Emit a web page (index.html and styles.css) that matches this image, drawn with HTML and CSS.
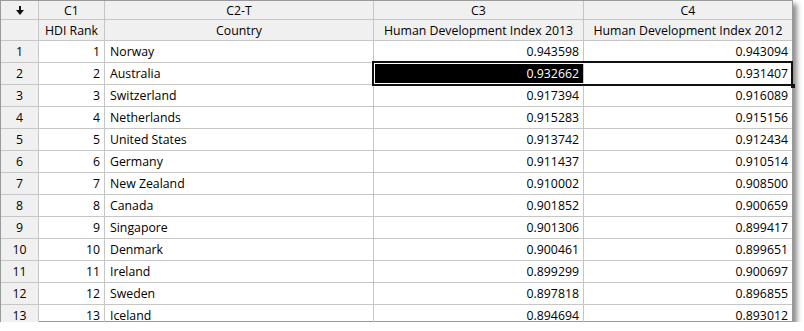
FILE: index.html
```html
<!DOCTYPE html>
<html lang="en">

<head>
    <meta charset="UTF-8">
    <title>Worksheet 1</title>
    <link rel="stylesheet" href="styles.css">
</head>

<body>
    <div class="sheet">
        <div class="row head-row">
            <div class="cell corner">
                <svg width="8" height="9" viewBox="0 0 8 9">
                    <rect x="3" y="0" width="2" height="5" fill="#111" />
                    <polygon points="0,4 8,4 4,9" fill="#111" />
                </svg>
            </div>
            <div class="cell head">C1</div>
            <div class="cell head">C2-T</div>
            <div class="cell head">C3</div>
            <div class="cell head">C4</div>
        </div>
        <div class="row name-row">
            <div class="cell corner"></div>
            <div class="cell head">HDI Rank</div>
            <div class="cell head">Country</div>
            <div class="cell head">Human Development Index 2013</div>
            <div class="cell head">Human Development Index 2012</div>
        </div>
        <div id="rows"></div>

        <!-- current selection C3:C4 row 2 -->
        <div class="selection"></div>
    </div>

    <script>
        const data = [
            [1, 'Norway', '0.943598', '0.943094'],
            [2, 'Australia', '0.932662', '0.931407'],
            [3, 'Switzerland', '0.917394', '0.916089'],
            [4, 'Netherlands', '0.915283', '0.915156'],
            [5, 'United States', '0.913742', '0.912434'],
            [6, 'Germany', '0.911437', '0.910514'],
            [7, 'New Zealand', '0.910002', '0.908500'],
            [8, 'Canada', '0.901852', '0.900659'],
            [9, 'Singapore', '0.901306', '0.899417'],
            [10, 'Denmark', '0.900461', '0.899651'],
            [11, 'Ireland', '0.899299', '0.900697'],
            [12, 'Sweden', '0.897818', '0.896855'],
            [13, 'Iceland', '0.894694', '0.893012']
        ];

        const body = document.getElementById('rows');
        data.forEach((rec, i) => {
            const row = document.createElement('div');
            row.className = 'row data-row';
            row.innerHTML = `
                <div class="cell rownum">${i + 1}</div>
                <div class="cell num">${rec[0]}</div>
                <div class="cell text">${rec[1]}</div>
                <div class="cell num${i === 1 ? ' active' : ''}">${rec[2]}</div>
                <div class="cell num">${rec[3]}</div>
            `;
            body.appendChild(row);
        });
    </script>
</body>

</html>
```

FILE: styles.css
```css
body {
    margin: 0;
    background-color: #fff;
    font-family: "Open Sans", "Noto Sans", sans-serif;
    font-size: 12.3px;
    color: #000;
}

.sheet {
    position: relative;
    width: 793px;
    height: 322px;
    box-sizing: border-box;
    border: 1px solid #9a9a9a;
    box-shadow: 4px 4px 5px rgba(0, 0, 0, 0.45);
    background-color: #fff;
}

#rows {
    height: 281px;
    overflow: hidden;
}

.row {
    display: grid;
    grid-template-columns: 38px 66px 269px 210px 208px;
}

.cell {
    box-sizing: border-box;
    border-right: 1px solid #c6c6c6;
    border-bottom: 1px solid #c6c6c6;
    white-space: nowrap;
    overflow: hidden;
    display: flex;
    align-items: center;
}

.cell:last-child {
    border-right: none;
}

.head-row .cell {
    height: 19px;
}

.name-row .cell {
    height: 21px;
}

.data-row .cell {
    height: 22px;
    padding-bottom: 1px;
}

.head, .corner, .rownum {
    background-color: #f0f0f0;
    justify-content: center;
}

.corner svg {
    display: block;
}

.num {
    justify-content: flex-end;
    padding-right: 4px;
}

.text {
    padding-left: 5px;
}

.active {
    background-color: #000;
    color: #fff;
}

.selection {
    position: absolute;
    left: 371px;
    top: 60px;
    width: 421px;
    height: 25px;
    box-sizing: border-box;
    border: 2px solid #111;
    box-shadow: inset 0 0 0 1px #fff;
    pointer-events: none;
}

.selection::after {
    content: "";
    position: absolute;
    right: -4px;
    bottom: -4px;
    width: 4px;
    height: 4px;
    background-color: #111;
}
```
